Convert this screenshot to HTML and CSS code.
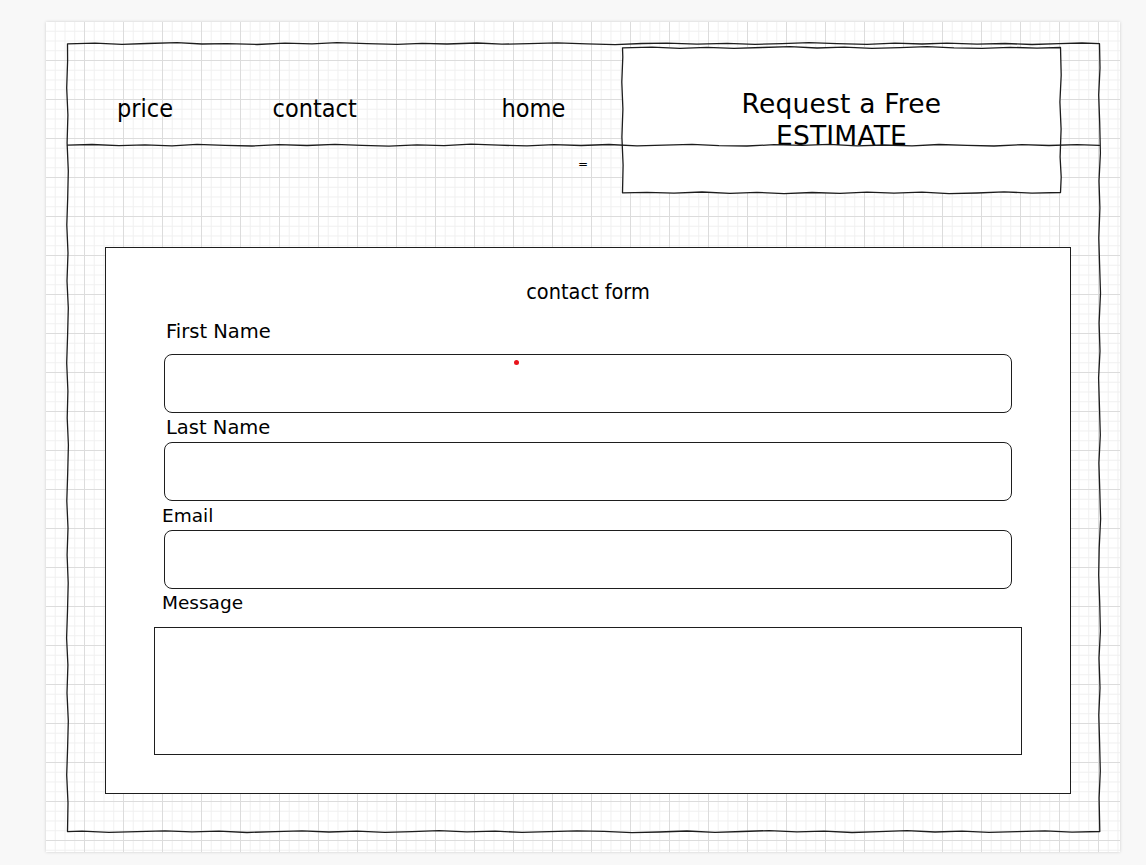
FILE: index.html
```html
<!DOCTYPE html>
<html lang="en">
<head>
<meta charset="utf-8">
<title>Contact form wireframe</title>
<link rel="stylesheet" href="styles.css">
</head>
<body>
<div class="page">
  <div class="frame">
    <header class="header">
      <nav class="nav">
        <span class="nav-item nav-price">price</span>
        <span class="nav-item nav-contact">contact</span>
        <span class="nav-item">home</span>
      </nav>
      <div class="estimate">
        <svg class="sketch" viewBox="0 0 439 146" aria-hidden="true">
          <path d="M0.5,0.8 L30,0.2 L58,1.3 L85,0.3 L112,1.4 L140,0.5 L168,-0.3 L195,1.0 L222,0.2 L250,1.3 L278,0.6 L305,-0.3 L332,0.9 L360,1.4 L388,0.3 L415,1.1 L438.5,0.5 L439.2,28 L437.9,55 L439.1,82 L438.1,110 L439.2,130 L438.5,145.5 L410,146.1 L382,144.9 L355,146 L327,146.6 L300,145.2 L272,146.2 L245,145.1 L218,146.4 L190,145.5 L162,146.6 L135,145.3 L108,146.3 L80,145 L52,146.1 L25,145.4 L0.5,145.8 L1.1,118 L-0.1,90 L0.9,62 L-0.2,35 L0.8,10 Z"/>
        </svg>
        <div class="estimate-text">Request a Free<br>ESTIMATE</div>
      </div>
    </header>
    <div class="subbar"><span class="menu-glyph">=</span></div>
    <section class="contact-box">
      <h2 class="form-title">contact form</h2>
      <div class="field-label label-wide first">First Name</div>
      <div class="field first-field"></div>
      <div class="field-label label-wide">Last Name</div>
      <div class="field"></div>
      <div class="field-label label-narrow">Email</div>
      <div class="field"></div>
      <div class="field-label label-narrow msg-label">Message</div>
      <div class="message-area"></div>
      <span class="cursor-dot"></span>
    </section>
    <svg class="frame-sketch" viewBox="0 0 1033 789" aria-hidden="true">
      <path d="M0.5,0.8 L28,0.1 L55,1.3 L80,0.5 L110,-0.4 L135,1.0 L160,0.6 L190,1.5 L218,0.2 L245,0.9 L270,-0.3 L300,0.7 L330,1.4 L355,0.3 L380,1.0 L410,0 L435,1.2 L462,0.6 L490,-0.2 L520,0.8 L548,1.6 L575,0.5 L600,0.1 L630,1.1 L660,0.4 L688,1.4 L715,0.6 L742,-0.3 L770,0.7 L800,1.3 L828,0.2 L855,1.0 L880,0.1 L910,1.2 L938,0.5 L965,1.5 L992,0.6 L1015,0 L1032.5,0.7 L1033,25 L1031.7,52 L1032.7,80 L1033.4,110 L1032,138 L1032.9,165 L1031.8,195 L1032.6,222 L1033.5,250 L1032.1,280 L1033,308 L1031.6,335 L1032.5,365 L1033.3,392 L1031.9,420 L1032.8,448 L1033.6,476 L1032.2,505 L1031.7,532 L1032.7,560 L1033.4,588 L1032,615 L1033,645 L1031.8,672 L1032.6,700 L1033.3,728 L1032.1,755 L1032.8,788.5 L1005,789.1 L978,787.8 L950,788.7 L922,789.4 L895,788.1 L868,789 L840,787.7 L812,788.6 L785,789.5 L757,788.2 L730,788.9 L702,787.6 L675,788.5 L648,789.3 L620,788 L592,789 L565,789.6 L537,788.3 L510,787.8 L482,788.7 L455,789.4 L428,788.1 L400,788.9 L372,787.7 L345,788.6 L318,789.4 L290,788.2 L262,789 L235,787.8 L208,788.6 L180,789.5 L152,788.1 L125,788.9 L98,787.8 L70,788.7 L42,789.3 L15,788.2 L0.5,788.6 L1,760 L-0.3,732 L0.6,705 L1.3,678 L0,650 L0.9,622 L-0.4,595 L0.5,568 L1.2,540 L0.1,512 L1,485 L-0.2,458 L0.7,430 L1.4,402 L0.2,375 L0.9,348 L-0.3,320 L0.6,292 L1.3,265 L0,238 L1,210 L-0.2,182 L0.7,155 L1.3,128 L0.1,100 L0.9,72 L-0.3,45 L0.6,18 Z"/>
      <path d="M0.5,102.2 L25,101.5 L52,102.7 L78,101.8 L105,102.9 L130,101.3 L158,102.3 L185,103 L212,101.7 L240,102.5 L268,101.4 L295,102.4 L322,103.1 L350,101.8 L377,102.6 L404,101.2 L432,102.2 L460,102.9 L487,101.6 L514,102.5 L542,101.5 L570,102.8 L597,102.1 L625,101.3 L652,102.7 L680,103 L707,101.7 L735,102.4 L762,101.4 L790,102.8 L817,102 L845,102.9 L872,101.5 L900,102.3 L927,103 L955,101.6 L982,102.5 L1010,101.7 L1032.5,102.3"/>
    </svg>
  </div>
</div>
</body>
</html>
```

FILE: styles.css
```css
html, body {
  margin: 0;
  padding: 0;
}

body {
  background: #f8f8f8;
  font-family: "DejaVu Sans", Verdana, sans-serif;
  color: #000;
  width: 1146px;
  height: 865px;
  overflow: hidden;
}

.page {
  margin: 22px 0 0 46px;
  width: 1074px;
  height: 830px;
  box-sizing: border-box;
  padding: 21px 20px 20px 21px;
  background-color: #ffffff;
  background-image:
    linear-gradient(to right, #dcdcdc 1px, transparent 1px),
    linear-gradient(to bottom, #dcdcdc 1px, transparent 1px),
    linear-gradient(to right, #f0f0f0 1px, transparent 1px),
    linear-gradient(to bottom, #f0f0f0 1px, transparent 1px);
  background-size: 39px 39px, 39px 39px, 9.75px 9.75px, 9.75px 9.75px;
  background-position: -1px -1px, -1px -1px, -1px -1px, -1px -1px;
  box-shadow: 0 0 3px rgba(0, 0, 0, 0.18);
}

.frame {
  position: relative;
  width: 1033px;
  height: 789px;
}

.frame-sketch {
  position: absolute;
  left: 0;
  top: 0;
  width: 1033px;
  height: 789px;
  overflow: visible;
  z-index: 3;
  pointer-events: none;
}

.frame-sketch path,
.sketch path {
  fill: none;
  stroke: #1c1c1c;
  stroke-width: 1.3;
  stroke-linejoin: round;
  stroke-linecap: round;
}

/* header */
.header {
  display: flex;
  align-items: flex-start;
  height: 102px;
  padding: 0 39px 0 50px;
}

.nav {
  display: flex;
  margin-top: 51px;
  font-family: "DejaVu Sans Condensed", "DejaVu Sans", sans-serif;
  font-stretch: condensed;
  font-size: 25px;
  line-height: 30px;
}

.nav-price {
  width: 155.6px;
}

.nav-contact {
  width: 229px;
}

.estimate {
  position: relative;
  z-index: 1;
  flex-shrink: 0;
  margin-left: auto;
  margin-top: 4px;
  width: 439px;
  height: 146px;
  background: #ffffff;
  display: flex;
  align-items: center;
  justify-content: center;
}

.sketch {
  position: absolute;
  left: 0;
  top: 0;
  width: 439px;
  height: 146px;
  overflow: visible;
}

.estimate-text {
  position: relative;
  text-align: center;
  font-size: 26.5px;
  line-height: 32px;
  letter-spacing: 0.2px;
}

/* small glyph below header */
.subbar {
  height: 102px;
  box-sizing: border-box;
  padding: 12px 0 0 511px;
}

.menu-glyph {
  display: block;
  font-size: 12px;
  line-height: 14px;
}

/* contact form */
.contact-box {
  position: relative;
  margin-left: 38px;
  width: 966px;
  height: 547px;
  box-sizing: border-box;
  border: 1px solid #1e1e1e;
  background: #ffffff;
  padding-top: 31px;
  display: flex;
  flex-direction: column;
  align-items: flex-start;
}

.form-title {
  align-self: stretch;
  margin: 0;
  text-align: center;
  font-family: "DejaVu Sans Condensed", "DejaVu Sans", sans-serif;
  font-stretch: condensed;
  font-weight: normal;
  font-size: 21.5px;
  line-height: 26px;
}

.field-label {
  line-height: 24px;
  margin-top: 3px;
}

.label-wide {
  font-size: 19.5px;
  margin-left: 60px;
}

.label-narrow {
  font-size: 18.5px;
  margin-left: 56px;
}

.field-label.first {
  margin-top: 15px;
}

.msg-label {
  margin-top: 2px;
}

.field {
  margin: 2px 0 0 58px;
  width: 848px;
  height: 59px;
  box-sizing: border-box;
  border: 1px solid #1e1e1e;
  border-radius: 8px;
  background: #ffffff;
}

.field.first-field {
  margin-top: 10px;
}

.message-area {
  margin: 12px 0 0 48px;
  width: 868px;
  height: 128px;
  box-sizing: border-box;
  border: 1px solid #1e1e1e;
  background: #ffffff;
}

.cursor-dot {
  position: absolute;
  left: 407.5px;
  top: 111.5px;
  width: 5px;
  height: 5px;
  border-radius: 50%;
  background: #e8141c;
}
```
